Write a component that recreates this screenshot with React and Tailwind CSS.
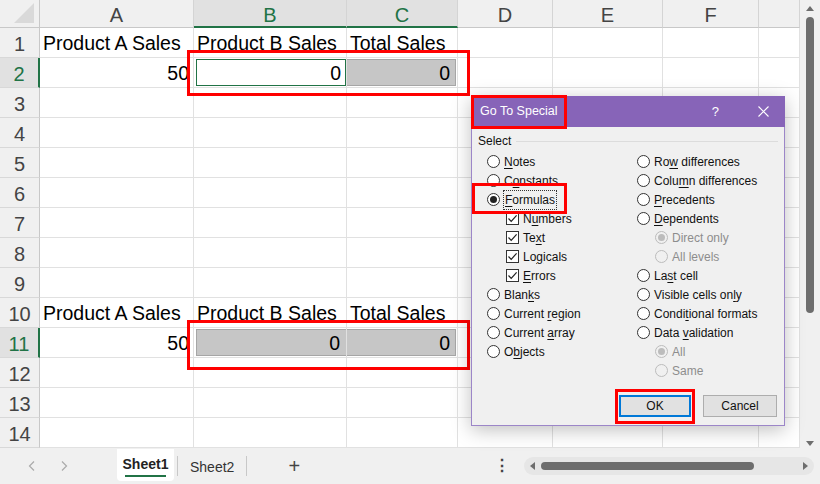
const COLS = [
  { key: 'A', w: 'w-[154px]' },
  { key: 'B', w: 'w-[153px]', sel: true },
  { key: 'C', w: 'w-[111px]', sel: true },
  { key: 'D', w: 'w-[95px]' },
  { key: 'E', w: 'w-[110px]' },
  { key: 'F', w: 'w-[96px]' },
  { key: '', w: 'w-[41px]' },
];

const labels = { A: 'Product A Sales', B: 'Product B Sales', C: 'Total Sales' };

const Cell = ({ w, children, className = '' }) => (
  <div className={`${w} h-full shrink-0 border-r border-b border-[#e1e1e1] flex items-center ${className}`}>
    {children}
  </div>
);

const LabelRow = () =>
  COLS.map((c) => (
    <Cell key={c.key} w={c.w} className="pt-[3px]">
      {labels[c.key] && <span className="pl-[3px] whitespace-nowrap">{labels[c.key]}</span>}
    </Cell>
  ));

const ValueRow = ({ active }) => (
  <>
    <Cell w="w-[154px]" className="justify-end pr-[4px] pt-[3px]">50</Cell>
    <Cell w="w-[153px]" className="pl-[2px] py-[1px]">
      {active ? (
        <div className="h-full flex-1 border border-[#217346] bg-white flex items-center justify-end pr-[4px] pt-[3px]">0</div>
      ) : (
        <div className="h-full flex-1 border-y border-l border-[#a6a6a6] bg-[#c6c6c6] flex items-center justify-end pr-[6px] pt-[3px]">0</div>
      )}
    </Cell>
    <Cell w="w-[111px]" className="py-[1px] pr-[1px]">
      <div className="h-full flex-1 border-y border-r border-[#a6a6a6] bg-[#c6c6c6] flex items-center justify-end pr-[5px] pt-[3px]">0</div>
    </Cell>
    <Cell w="w-[95px]" />
    <Cell w="w-[110px]" />
    <Cell w="w-[96px]" />
    <Cell w="w-[41px]" />
  </>
);

const EmptyRow = () => COLS.map((c) => <Cell key={c.key} w={c.w} />);

const Radio = ({ checked, disabled }) => (
  <span
    className={`w-[13px] h-[13px] rounded-full border shrink-0 flex items-center justify-center ${
      disabled ? 'border-[#bcbcbc] bg-[#f0f0f0]' : 'border-[#333] bg-white'
    }`}
  >
    {checked && <span className={`w-[7px] h-[7px] rounded-full ${disabled ? 'bg-[#bcbcbc]' : 'bg-[#222]'}`} />}
  </span>
);

const Check = () => (
  <span className="w-[13px] h-[13px] border border-[#333] bg-white shrink-0 flex items-center justify-center">
    <svg width="11" height="11" viewBox="0 0 11 11">
      <path d="M1.5 5.5 L4.2 8.3 L9.6 2.3" fill="none" stroke="#222" strokeWidth="1.2" />
    </svg>
  </span>
);

// label with one underlined letter
const L = ({ t, u, grey }) => {
  const i = u == null ? -1 : u;
  return (
    <span className={`whitespace-nowrap ${grey ? 'text-[#8d8d8d]' : 'text-[#111]'}`}>
      {i < 0 ? t : (
        <>
          {t.slice(0, i)}
          <span className="underline underline-offset-2">{t[i]}</span>
          {t.slice(i + 1)}
        </>
      )}
    </span>
  );
};

const left = [
  { type: 'r', t: 'Notes', u: 0 },
  { type: 'r', t: 'Constants', u: 1 },
  { type: 'r', t: 'Formulas', u: 0, checked: true, focus: true },
  { type: 'c', t: 'Numbers', u: 1 },
  { type: 'c', t: 'Text', u: 2 },
  { type: 'c', t: 'Logicals', u: 2 },
  { type: 'c', t: 'Errors', u: 0 },
  { type: 'r', t: 'Blanks', u: 4 },
  { type: 'r', t: 'Current region', u: 8 },
  { type: 'r', t: 'Current array', u: 8 },
  { type: 'r', t: 'Objects', u: 1 },
];

const right = [
  { type: 'r', t: 'Row differences', u: 2 },
  { type: 'r', t: 'Column differences', u: 4 },
  { type: 'r', t: 'Precedents', u: 0 },
  { type: 'r', t: 'Dependents', u: 0 },
  { type: 's', t: 'Direct only', checked: true },
  { type: 's', t: 'All levels' },
  { type: 'r', t: 'Last cell', u: 2 },
  { type: 'r', t: 'Visible cells only', u: 16 },
  { type: 'r', t: 'Conditional formats', u: 5 },
  { type: 'r', t: 'Data validation', u: 5 },
  { type: 's', t: 'All', checked: true },
  { type: 's', t: 'Same' },
];

const Option = ({ o }) => {
  if (o.type === 'c')
    return (
      <div className="h-[19px] flex items-center gap-[4px] pl-[19px]">
        <Check />
        <L t={o.t} u={o.u} />
      </div>
    );
  if (o.type === 's')
    return (
      <div className="h-[19px] flex items-center gap-[4px] pl-[18px]">
        <Radio checked={o.checked} disabled />
        <L t={o.t} grey />
      </div>
    );
  return (
    <div className="h-[19px] flex items-center gap-[4px]">
      <Radio checked={o.checked} />
      <span className={o.focus ? 'outline outline-1 outline-dotted outline-[#333] px-[1px]' : ''}>
        <L t={o.t} u={o.u} />
      </span>
    </div>
  );
};

const Dialog = () => (
  <div
    className="absolute left-[471px] top-[96px] w-[314px] h-[330px] flex flex-col shadow-[0_4px_18px_rgba(0,0,0,0.25)] text-[12px]"
    style={{ fontFamily: '"Liberation Sans", Arial, sans-serif' }}
  >
    <div className="h-[31px] bg-[#8764b8] flex items-center pl-[9px] pr-[16px] text-white text-[12.5px]">
      <span className="flex-1">Go To Special</span>
      <span className="mr-[39px] text-[13px]">?</span>
      <svg width="11" height="11" viewBox="0 0 11 11">
        <path d="M0.5 0.5 L10.5 10.5 M10.5 0.5 L0.5 10.5" stroke="#fff" strokeWidth="1.1" />
      </svg>
    </div>
    <div className="flex-1 bg-[#f0f0f0] border-x border-b border-[#9c86c8] flex flex-col px-[6px]">
      <div className="flex items-center gap-[5px] mt-[7px] h-[14px]">
        <span className="text-[#111]">Select</span>
        <span className="flex-1 h-px bg-[#dcdcdc]" />
      </div>
      <div className="flex mt-[4px] pl-[9px]">
        <div className="w-[150px] flex flex-col">
          {left.map((o) => <Option key={o.t} o={o} />)}
        </div>
        <div className="flex flex-col">
          {right.map((o, i) => <Option key={o.t + i} o={o} />)}
        </div>
      </div>
      <div className="flex-1" />
      <div className="flex justify-end gap-[12px] pr-[1px] mb-[8px]">
        <button className="w-[72px] h-[22px] bg-[#e1e1e1] border-2 border-[#0078d7] text-[#111] text-[12px]">OK</button>
        <button className="w-[74px] h-[22px] bg-[#e1e1e1] border border-[#adadad] text-[#111] text-[12px]">Cancel</button>
      </div>
    </div>
  </div>
);

const Tri = ({ d, className = '' }) => (
  <svg width="10" height="10" viewBox="0 0 10 10" className={className}>
    <path d={d} fill="#6d6d6d" />
  </svg>
);

export default function App() {
  const rows = [];
  for (let r = 1; r <= 14; r++) {
    let content;
    if (r === 1 || r === 10) content = <LabelRow />;
    else if (r === 2) content = <ValueRow active />;
    else if (r === 11) content = <ValueRow />;
    else content = <EmptyRow />;
    const sel = r === 2 || r === 11;
    rows.push(
      <div key={r} className="h-[30px] flex">
        <div
          className={`w-[40px] shrink-0 h-full flex items-center justify-center pt-[3px] text-[20px] border-b border-[#d8d8d8] ${
            sel ? 'bg-[#e1e1e1] text-[#217346] border-r-2 border-r-[#217346]' : 'bg-[#f0f0f0] text-[#444] border-r border-r-[#c8c8c8]'
          }`}
        >
          {r}
        </div>
        {content}
      </div>
    );
  }

  return (
    <div
      className="w-[820px] h-[484px] relative overflow-hidden bg-white text-[19.5px] text-black"
      style={{ fontFamily: '"Liberation Sans", Arial, sans-serif' }}
    >
      <div className="flex h-[448px]">
        <div className="w-[800px] flex flex-col">
          {/* column headers */}
          <div className="h-[28px] flex bg-[#f0f0f0] text-[#444] text-[20px]">
            <div className="w-[40px] shrink-0 border-r border-b border-[#c8c8c8] flex items-end justify-end pr-[5px] pb-[4px]">
              <svg width="20" height="20" viewBox="0 0 20 20">
                <path d="M20 0 L20 20 L0 20 Z" fill="#d9d9d9" />
              </svg>
            </div>
            {COLS.map((c) => (
              <div
                key={c.key + 'h'}
                className={`${c.w} shrink-0 flex items-center justify-center pt-[3px] border-r border-[#d4d4d4] ${
                  c.sel ? 'bg-[#e1e1e1] text-[#217346] border-b-2 border-b-[#217346]' : 'border-b border-b-[#c8c8c8]'
                }`}
              >
                {c.key}
              </div>
            ))}
          </div>
          {rows}
        </div>
        {/* vertical scrollbar */}
        <div className="w-[20px] bg-[#f0f0f0] flex flex-col items-center pt-[4px] pb-[0px]">
          <Tri d="M1 7 L5 2 L9 7 Z" />
          <div className="w-[8px] h-[296px] rounded-full bg-[#6d6d6d] mt-[3px]" />
          <div className="flex-1" />
          <Tri d="M1 3 L9 3 L5 8 Z" />
        </div>
      </div>

      {/* sheet tabs */}
      <div className="h-[36px] bg-[#f0f0f0] flex items-center text-[14px] text-[#333]">
        <div className="w-[117px] flex items-center gap-[20px] pl-[26px] text-[#aaa]">
          <svg width="12" height="12" viewBox="0 0 12 12"><path d="M8 1.5 L3.5 6 L8 10.5" fill="none" stroke="#aaa" strokeWidth="1.2" /></svg>
          <svg width="12" height="12" viewBox="0 0 12 12"><path d="M4 1.5 L8.5 6 L4 10.5" fill="none" stroke="#aaa" strokeWidth="1.2" /></svg>
        </div>
        <div className="w-[57px] h-[32px] self-start mt-[1px] bg-white rounded-b-[4px] flex flex-col items-center justify-center pt-[2px]">
          <span className="font-bold text-[#222] text-[14px] leading-[16px]">Sheet1</span>
          <span className="w-[41px] h-[2px] bg-[#217346] mt-[3px]" />
        </div>
        <span className="w-px h-[20px] bg-[#c8c8c8] ml-[3px]" />
        <span className="ml-[12px] pt-[2px]">Sheet2</span>
        <span className="w-px h-[20px] bg-[#c8c8c8] ml-[12px]" />
        <span className="ml-[41px] text-[20px] font-light text-[#444]">+</span>
        <span className="ml-[194px] text-[16px] font-bold text-[#444] leading-none">⋮</span>
        <div className="ml-[14px] w-[290px] h-[18px] rounded-full bg-[#e6e6e6] flex items-center px-[4px] gap-[3px]">
          <Tri d="M7 1 L7 9 L2 5 Z" />
          <div className="w-[213px] h-[8px] rounded-full bg-[#6d6d6d]" />
          <div className="flex-1" />
          <Tri d="M3 1 L3 9 L8 5 Z" />
        </div>
      </div>

      {/* red highlight boxes */}
      <div className="absolute left-[187px] top-[50px] w-[283px] h-[46px] border-[3px] border-[#ff0000]" />
      <div className="absolute left-[187px] top-[320px] w-[283px] h-[50px] border-[3px] border-[#ff0000]" />

      <Dialog />

      <div className="absolute left-[471px] top-[95px] w-[96px] h-[34px] border-[3px] border-[#ff0000]" />
      <div className="absolute left-[472px] top-[183px] w-[95px] h-[31px] border-[3px] border-[#ff0000]" />
      <div className="absolute left-[615px] top-[389px] w-[80px] h-[35px] border-[3px] border-[#ff0000]" />
    </div>
  );
}
